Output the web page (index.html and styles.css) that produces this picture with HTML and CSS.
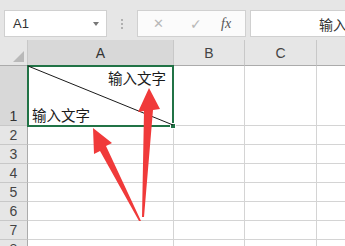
FILE: index.html
```html
<!DOCTYPE html>
<html lang="zh">
<head>
<meta charset="utf-8">
<link rel="stylesheet" href="styles.css">
</head>
<body>
<div class="page">
  <div class="toolbar">
    <div class="namebox"><span class="nb-text">A1</span><span class="nb-arrow"></span></div>
    <div class="dots"><i></i><i></i><i></i></div>
    <div class="fxbox">
      <span class="fx-x">✕</span>
      <span class="fx-check">✓</span>
      <span class="fx-f">fx</span>
    </div>
    <div class="formula"><span class="formula-text">输入文字</span></div>
  </div>
  <div class="sheet">
    <div class="corner"><span class="tri"></span></div>
    <div class="colh sel">A</div>
    <div class="colh">B</div>
    <div class="colh">C</div>
    <div class="colh last"></div>

    <div class="rowh tall">1</div>
    <div class="cell a1">
      <span class="t-top">输入文字</span>
      <span class="t-bot">输入文字</span>
    </div>
    <div class="cell"></div><div class="cell"></div><div class="cell last"></div>

    <div class="rowh">2</div><div class="cell"></div><div class="cell"></div><div class="cell"></div><div class="cell last"></div>
    <div class="rowh">3</div><div class="cell"></div><div class="cell"></div><div class="cell"></div><div class="cell last"></div>
    <div class="rowh">4</div><div class="cell"></div><div class="cell"></div><div class="cell"></div><div class="cell last"></div>
    <div class="rowh">5</div><div class="cell"></div><div class="cell"></div><div class="cell"></div><div class="cell last"></div>
    <div class="rowh">6</div><div class="cell"></div><div class="cell"></div><div class="cell"></div><div class="cell last"></div>
    <div class="rowh">7</div><div class="cell"></div><div class="cell"></div><div class="cell"></div><div class="cell last"></div>
    <div class="rowh">8</div><div class="cell"></div><div class="cell"></div><div class="cell"></div><div class="cell last"></div>
  </div>
  <div class="selection"><span class="handle"></span></div>
  <svg class="overlay" width="345" height="246" viewBox="0 0 345 246">
    <line x1="28" y1="66" x2="173" y2="125" stroke="#1a1a1a" stroke-width="1"/>
    <polygon fill="#f03a3a" points="149,88 160,109 153,110 144,217 142,217 144,111 138,112"/>
    <polygon fill="#f03a3a" points="93,128 112,143 106,146 141,221 139,221 100,151 94,154"/>
  </svg>
</div>
</body>
</html>
```

FILE: styles.css
```css
* { box-sizing: border-box; }
html, body { margin: 0; padding: 0; background: #fff; }
body {
  font-family: "Noto Sans CJK SC", "Noto Sans", "Liberation Sans", sans-serif;
  color: #222;
  width: 345px;
  height: 246px;
  overflow: hidden;
}
.page { position: relative; width: 345px; height: 246px; overflow: hidden; }

.toolbar {
  height: 40px;
  background: #e6e6e6;
  display: flex;
  align-items: flex-start;
  padding-top: 10px;
  padding-left: 4px;
}
.namebox {
  width: 103px;
  height: 27px;
  background: #fff;
  border: 1px solid #d0d0d0;
  display: flex;
  align-items: center;
  justify-content: space-between;
  padding: 0 7px 0 8px;
}
.nb-text {
  font-family: "Liberation Sans", sans-serif;
  font-size: 13px;
  color: #333;
}
.nb-arrow {
  width: 0; height: 0;
  border-left: 3px solid transparent;
  border-right: 3px solid transparent;
  border-top: 4px solid #777;
}
.dots {
  width: 30px;
  height: 27px;
  display: flex;
  flex-direction: column;
  align-items: center;
  justify-content: center;
  gap: 2px;
}
.dots i {
  display: block;
  width: 2px; height: 2px;
  background: #b0b0b0;
}
.fxbox {
  width: 109px;
  height: 27px;
  background: #fbfbfb;
  border: 1px solid #d0d0d0;
  display: flex;
  align-items: center;
  padding-left: 15px;
}
.fx-x { color: #b8b8b8; font-size: 13px; width: 37px; font-family: "DejaVu Sans", sans-serif; }
.fx-check { color: #b8b8b8; font-size: 14px; width: 31px; font-family: "DejaVu Sans", sans-serif; }
.fx-f {
  font-family: "Liberation Serif", serif;
  font-style: italic;
  font-size: 14px;
  color: #555;
}
.formula {
  margin-left: 4px;
  flex: 1;
  height: 27px;
  background: #fff;
  border: 1px solid #d0d0d0;
  border-right: none;
  overflow: hidden;
  white-space: nowrap;
  padding-left: 68px;
  display: flex;
  align-items: center;
}
.formula-text { font-size: 14px; color: #333; }

.sheet {
  display: grid;
  grid-template-columns: 28px 146px 71px 72px 28px;
  grid-template-rows: 26px 60px repeat(7, 19px);
  background: #fff;
}
.corner {
  background: #e6e6e6;
  border-right: 1px solid #c8c8c8;
  border-bottom: 1px solid #ababab;
  position: relative;
}
.tri {
  position: absolute;
  right: 3px; bottom: 3px;
  width: 0; height: 0;
  border-left: 11px solid transparent;
  border-bottom: 11px solid #b9b9b9;
}
.colh {
  background: #e6e6e6;
  border-right: 1px solid #c8c8c8;
  border-bottom: 1px solid #ababab;
  display: flex;
  align-items: center;
  justify-content: center;
  font-family: "Liberation Sans", sans-serif;
  font-size: 14px;
  color: #444;
  padding-top: 1px;
}
.colh.sel { background: #d8d8d8; color: #333; }
.colh.last { border-right: none; }
.rowh {
  background: #e6e6e6;
  border-right: 1px solid #ababab;
  border-bottom: 1px solid #c8c8c8;
  display: flex;
  align-items: flex-end;
  justify-content: center;
  font-family: "Liberation Sans", sans-serif;
  font-size: 14px;
  line-height: 17px;
  color: #444;
}
.rowh.tall { background: #d8d8d8; color: #333; }
.cell {
  border-right: 1px solid #d4d4d4;
  border-bottom: 1px solid #d4d4d4;
}
.cell.last { border-right: none; }
.a1 {
  display: flex;
  flex-direction: column;
  justify-content: space-between;
  padding: 2px 7px 0 4px;
  font-size: 14.5px;
  line-height: 20px;
  color: #1a1a1a;
}
.t-top { align-self: flex-end; }
.t-bot { align-self: flex-start; }

.selection {
  position: absolute;
  left: 27px;
  top: 65px;
  width: 147px;
  height: 62px;
  border: 2px solid #217346;
}
.handle {
  position: absolute;
  right: -4px;
  bottom: -4px;
  width: 6px; height: 6px;
  background: #217346;
  border: 1px solid #fff;
}
.overlay {
  position: absolute;
  left: 0; top: 0;
  pointer-events: none;
}
```
